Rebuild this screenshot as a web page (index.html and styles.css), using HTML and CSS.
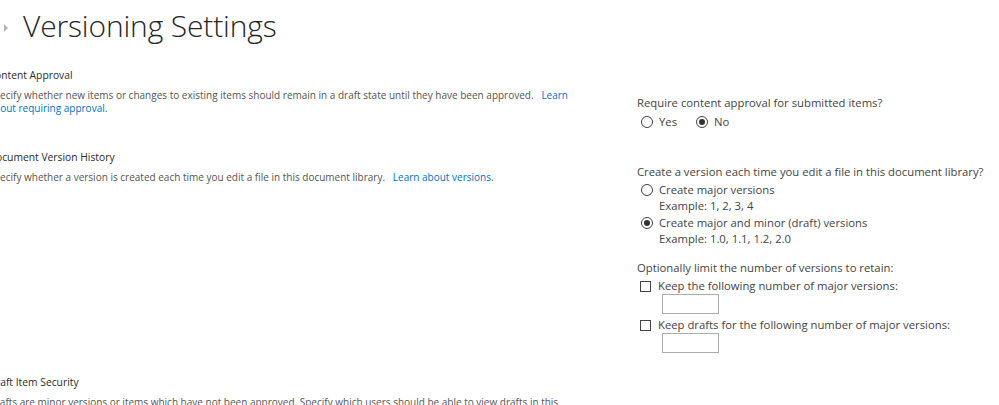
FILE: index.html
```html
<!DOCTYPE html>
<html lang="en">
<head>
<meta charset="utf-8">
<title>Versioning Settings</title>
<link rel="stylesheet" href="styles.css">
</head>
<body>
<div class="page">
  <header class="title-row">
    <span class="crumb-arrow"></span>
    <h1 class="title">Versioning Settings</h1>
  </header>

  <div class="form">
    <section class="sec sec-approval">
      <div class="info">
        <h3 class="sec-head">Content Approval</h3>
        <p class="sec-desc">Specify whether new items or changes to existing items should remain in a draft state until they have been approved.&nbsp;&nbsp; <a class="link" href="#">Learn about requiring approval.</a></p>
      </div>
      <div class="controls">
        <div class="question">Require content approval for submitted items?</div>
        <div class="radio-inline">
          <label class="opt"><span class="radio"></span>Yes</label>
          <label class="opt"><span class="radio checked"></span>No</label>
        </div>
      </div>
    </section>

    <section class="sec sec-history">
      <div class="info">
        <h3 class="sec-head">Document Version History</h3>
        <p class="sec-desc">Specify whether a version is created each time you edit a file in this document library.&nbsp;&nbsp; <a class="link" href="#">Learn about versions.</a></p>
      </div>
      <div class="controls">
        <div class="question">Create a version each time you edit a file in this document library?</div>
        <div class="opt-block">
          <label class="opt"><span class="radio"></span>Create major versions</label>
          <div class="example">Example: 1, 2, 3, 4</div>
        </div>
        <div class="opt-block opt-block-2">
          <label class="opt"><span class="radio checked"></span>Create major and minor (draft) versions</label>
          <div class="example">Example: 1.0, 1.1, 1.2, 2.0</div>
        </div>

        <div class="question q-limit">Optionally limit the number of versions to retain:</div>
        <div class="check-block">
          <label class="opt"><span class="check"></span>Keep the following number of major versions:</label>
          <div class="num-box"></div>
        </div>
        <div class="check-block">
          <label class="opt"><span class="check"></span>Keep drafts for the following number of major versions:</label>
          <div class="num-box"></div>
        </div>
      </div>
    </section>

    <section class="sec sec-security">
      <div class="info">
        <h3 class="sec-head">Draft Item Security</h3>
        <p class="sec-desc">Drafts are minor versions or items which have not been approved. Specify which users should be able to view drafts in this document library.</p>
      </div>
      <div class="controls"></div>
    </section>
  </div>
</div>
</body>
</html>
```

FILE: styles.css
```css
html, body {
  margin: 0;
  padding: 0;
  background: #ffffff;
}

body {
  font-family: "Open Sans", "Noto Sans", "Liberation Sans", sans-serif;
  color: #444444;
  overflow: hidden;
}

.page {
  width: 999px;
  height: 405px;
  overflow: hidden;
}

.title-row {
  box-sizing: border-box;
  display: flex;
  align-items: center;
  height: 56px;
  padding-left: 4px;
  padding-bottom: 4px;
}

.crumb-arrow {
  width: 0;
  height: 0;
  border-top: 4px solid transparent;
  border-bottom: 4px solid transparent;
  border-left: 4px solid #b3b3b3;
  margin-top: 4px;
  margin-right: 15px;
}

.title {
  margin: 0;
  font-weight: 300;
  font-size: 30px;
  color: #262626;
  letter-spacing: -0.15px;
  line-height: 1;
}

.form {
  margin-left: -11.5px;
}

.sec {
  display: grid;
  grid-template-columns: 648.5px 1fr;
}

.info {
  padding-right: 49px;
}

.sec-head {
  margin: 0;
  font-size: 10.3px;
  font-weight: 400;
  color: #2b2b2b;
  line-height: 16px;
}

.sec-desc {
  margin: 6px 0 0;
  font-size: 10px;
  line-height: 13px;
  color: #555555;
}

.link {
  color: #0072c6;
  text-decoration: none;
}

.controls {
  font-size: 11.3px;
  color: #444444;
  line-height: 16px;
}

.question {
  color: #444444;
}

.opt {
  display: flex;
  align-items: center;
}

.radio {
  box-sizing: border-box;
  width: 12px;
  height: 12px;
  border: 1px solid #444444;
  border-radius: 50%;
  margin: 0 6px 0 4px;
  display: flex;
  align-items: center;
  justify-content: center;
  flex: none;
}

.radio.checked::after {
  content: "";
  width: 6px;
  height: 6px;
  border-radius: 50%;
  background: #333333;
}

.check {
  box-sizing: border-box;
  width: 11px;
  height: 11px;
  border: 1px solid #444444;
  margin: 0 7px 0 3px;
  flex: none;
}

.radio-inline {
  display: flex;
  gap: 15px;
  margin-top: 3px;
}

.sec-approval {
  margin-top: 11px;
}

.sec-approval .controls {
  padding-top: 28px;
}

.sec-history {
  margin-top: 19px;
}

.sec-history .controls {
  padding-top: 15px;
}

.opt-block {
  margin-top: 2px;
}

.opt-block-2 {
  margin-top: 1px;
}

.example {
  padding-left: 22px;
}

.q-limit {
  margin-top: 13px;
}

.check-block {
  margin-top: 2px;
}

.num-box {
  box-sizing: border-box;
  width: 57px;
  height: 20px;
  border: 1px solid #ababab;
  margin: 0 0 3px 25px;
}

.sec-security {
  margin-top: 18px;
}
```
